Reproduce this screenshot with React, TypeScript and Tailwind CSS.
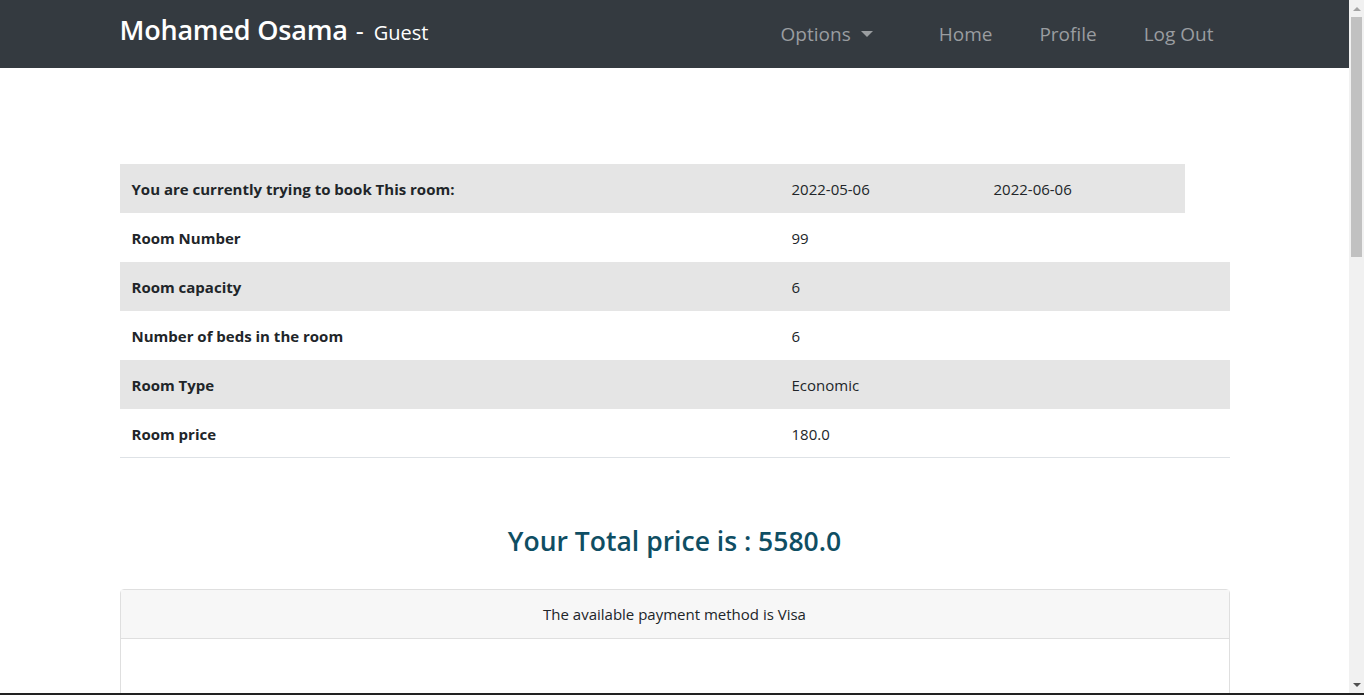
const rows = [
  { label: "Room Number", value: "99" },
  { label: "Room capacity", value: "6" },
  { label: "Number of beds in the room", value: "6" },
  { label: "Room Type", value: "Economic" },
  { label: "Room price", value: "180.0" },
];

function Scrollbar() {
  return (
    <div className="flex w-[15px] shrink-0 flex-col items-center bg-[#f1f1f1]">
      <div className="flex h-[17px] w-full items-center justify-center">
        <div className="h-0 w-0 border-x-[4px] border-b-[4px] border-x-transparent border-b-[#a3a3a3]" />
      </div>
      <div className="h-[240px] w-[11px] bg-[#c1c1c1]" />
      <div className="flex-1" />
      <div className="flex h-[17px] w-full items-center justify-center">
        <div className="h-0 w-0 border-x-[4px] border-t-[4px] border-x-transparent border-t-[#505050]" />
      </div>
    </div>
  );
}

export default function App() {
  return (
    <div
      className="flex h-[695px] flex-col overflow-hidden bg-white"
      style={{ fontFamily: '"Open Sans", "Noto Sans", sans-serif' }}
    >
      <div className="flex min-h-0 flex-1">
        <div className="min-w-0 flex-1">
          {/* Navbar */}
          <nav className="h-[68px] bg-[#343a40]">
            <div className="mx-auto flex h-full w-[1110px] items-center">
              <div className="flex items-baseline pb-[7px] text-white">
                <span className="text-[27px] font-semibold tracking-[-0.2px]">Mohamed Osama</span>
                <span className="ml-[8px] text-[25px]">-</span>
                <span className="ml-[10px] text-[20px]">Guest</span>
              </div>
              <div className="ml-auto flex items-center pr-[16px] text-[19px] text-[#9a9da0]">
                <span className="flex items-center">
                  Options
                  <span className="ml-[10px] h-0 w-0 border-x-[6px] border-t-[6px] border-x-transparent border-t-[#9a9da0]" />
                </span>
                <span className="ml-[66px]">Home</span>
                <span className="ml-[47px]">Profile</span>
                <span className="ml-[47px]">Log Out</span>
              </div>
            </div>
          </nav>

          <div className="mx-auto w-[1110px] pt-[96px] text-[15px] text-[#212529]">
            {/* Booking table */}
            <div className="flex h-[49px] w-[1065px] items-center bg-[#e5e5e5] pt-[2px]">
              <div className="w-[660px] px-[12px] font-bold">You are currently trying to book This room:</div>
              <div className="w-[202px] px-[12px]">2022-05-06</div>
              <div className="flex-1 px-[12px]">2022-06-06</div>
            </div>
            {rows.map((r, i) => (
              <div
                key={r.label}
                className={`flex h-[49px] items-center pt-[2px] ${i % 2 === 1 ? "bg-[#e5e5e5]" : ""} ${
                  i === rows.length - 1 ? "border-b border-[#dee2e6]" : ""
                }`}
              >
                <div className="w-[660px] px-[12px] font-bold">{r.label}</div>
                <div className="flex-1 px-[12px]">{r.value}</div>
              </div>
            ))}

            <h2 className="mt-[64px] text-center text-[26.5px] font-semibold text-[#0f4e63]">
              Your Total price is : 5580.0
            </h2>

            <div className="mt-[27px] h-[200px] rounded-[4px] border border-[#dfdfdf]">
              <div className="flex h-[49px] items-center justify-center border-b border-[#dfdfdf] bg-[#f7f7f7] text-[15px]">
                The available payment method is Visa
              </div>
            </div>
          </div>
        </div>
        <Scrollbar />
      </div>
      <div className="h-[2px] shrink-0 bg-[#222]" />
    </div>
  );
}
